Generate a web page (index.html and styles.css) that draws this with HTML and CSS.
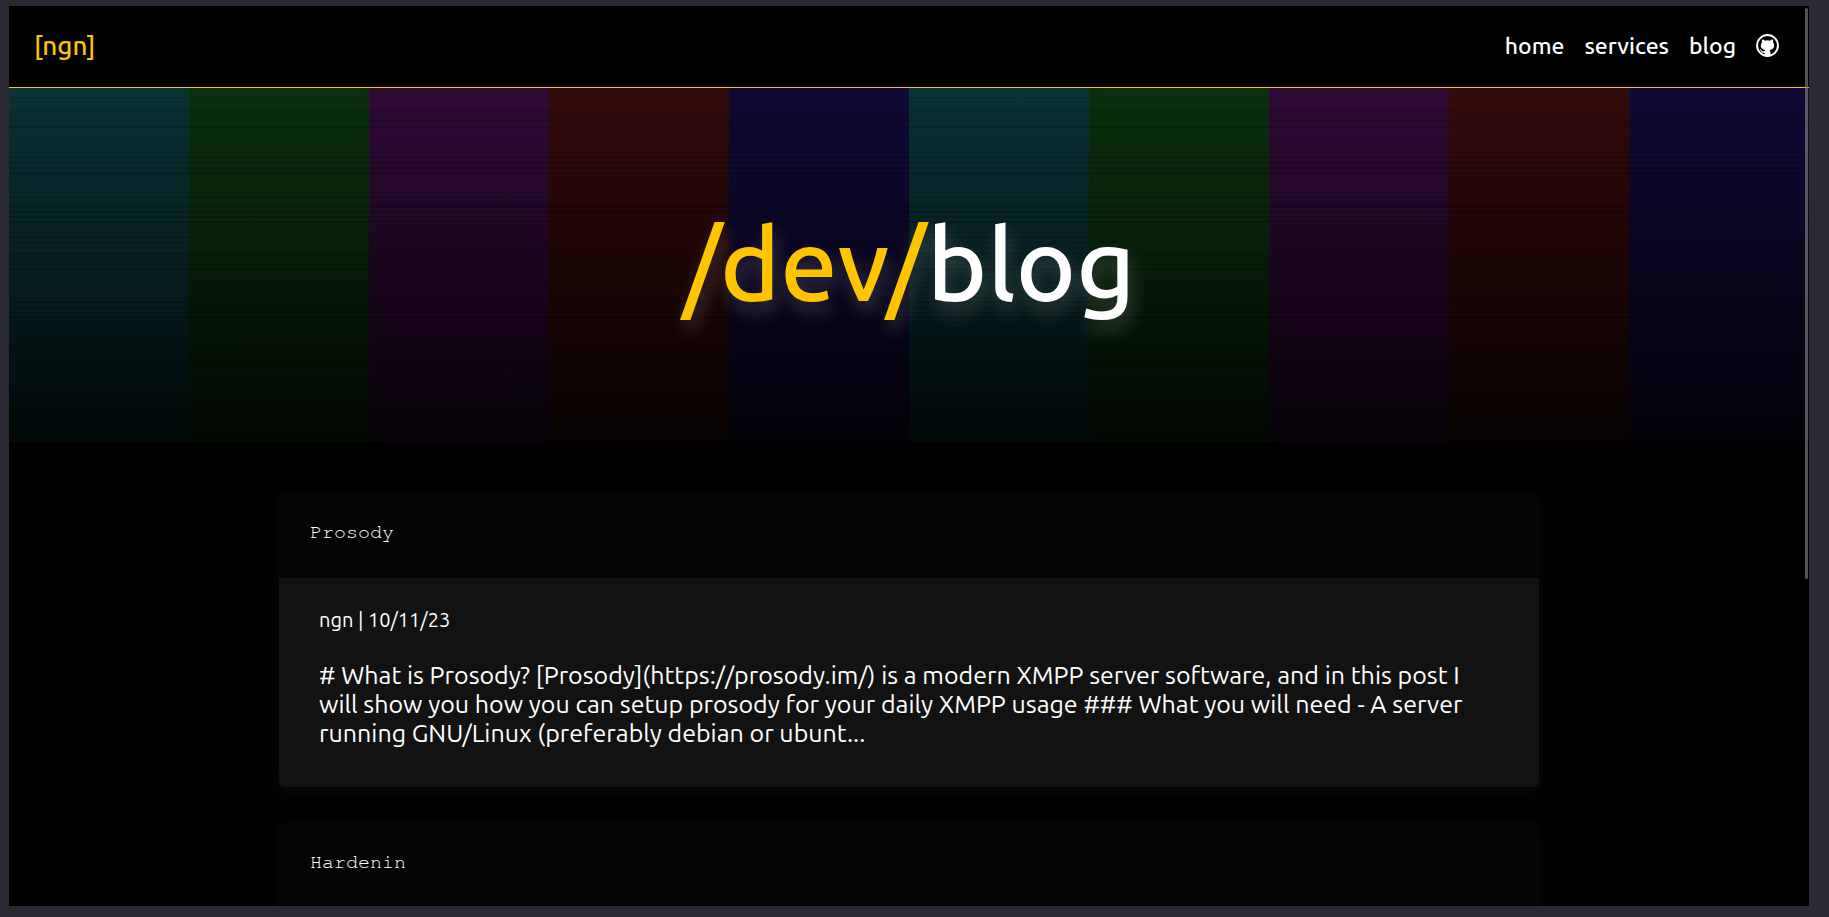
FILE: index.html
```html
<!DOCTYPE html>
<html lang="en">
<head>
<meta charset="utf-8">
<title>[ngn] | blog</title>
<link rel="stylesheet" href="styles.css">
</head>
<body>
<div class="window">
  <header class="navbar">
    <a class="brand" href="#">[ngn]</a>
    <nav class="links">
      <a href="#">home</a>
      <a href="#">services</a>
      <a href="#">blog</a>
      <a class="github" href="#" aria-label="GitHub">
        <svg viewBox="0 0 24 24" width="23" height="23" aria-hidden="true">
          <circle cx="12" cy="12" r="10.900" fill="none" stroke="#fff" stroke-width="2"/>
          <path fill="#fff" d="M9 23v-3.200c-2.600.3-3.500-.9-4.100-2.200-.3-.7-.7-1.100-1.200-1.500.9-.3 1.700.2 2.200 1 .7 1.100 1.400 1.400 3.100 1 .1-.6.4-1.200.8-1.500-3-.4-4.800-1.900-4.800-4.700 0-1.300.4-2.300 1.200-3.100-.3-1-.2-2.100.2-3 1.200 0 2.200.6 3 1.200a10 10 0 0 1 5.200 0c.8-.6 1.800-1.200 3-1.200.4.900.5 2 .2 3 .8.8 1.200 1.800 1.200 3.100 0 2.800-1.800 4.300-4.800 4.700.6.5.9 1.300.9 2.300V23z"/>
        </svg>
      </a>
    </nav>
  </header>
  <main>
    <section class="hero">
      <h1><span class="path">/dev/</span>blog</h1>
    </section>
    <section class="posts">
      <article class="post">
        <h2>Prosody</h2>
        <div class="body">
          <p class="meta">ngn | 10/11/23</p>
          <p class="text"># What is Prosody? [Prosody](https://prosody.im/) is a modern XMPP server software, and in this post I will show you how you can setup prosody for your daily XMPP usage ### What you will need - A server running GNU/Linux (preferably debian or ubunt...</p>
        </div>
      </article>
      <article class="post">
        <h2>Hardenin</h2>
      </article>
    </section>
  </main>
  <div class="scrollbar"></div>
</div>
</body>
</html>
```
FILE: styles.css
```css
* {
  box-sizing: border-box;
  margin: 0;
  padding: 0;
}

body {
  height: 100vh;
  padding: 6px 20px 11px 9px;
  background: #2b2933;
  color: #fff;
  font-family: Ubuntu, "Noto Sans", sans-serif;
  overflow: hidden;
}

.window {
  position: relative;
  height: 100%;
  background: #000;
  overflow: hidden;
}

.navbar {
  display: flex;
  align-items: center;
  justify-content: space-between;
  height: 82px;
  padding: 0 30px 2px 25px;
  border-bottom: 1px solid #ffc400;
  font-size: 23px;
  font-weight: 500;
}

.navbar a {
  color: #fff;
  text-decoration: none;
}

.navbar .brand {
  color: #ffc400;
  font-size: 26px;
}

.links {
  display: flex;
  align-items: center;
  gap: 20px;
}

.github svg {
  display: block;
}

.hero {
  display: flex;
  align-items: center;
  justify-content: center;
  height: 354px;
  padding-bottom: 4px;
  background:
    repeating-linear-gradient(rgba(0, 0, 0, 0) 0 4px, rgba(0, 0, 0, 0.15) 4px 5px),
    repeating-linear-gradient(rgba(0, 0, 0, 0) 0 21px, rgba(0, 0, 0, 0.15) 21px 23px, rgba(0, 0, 0, 0) 23px 27px, rgba(0, 0, 0, 0.25) 27px 28px, rgba(0, 0, 0, 0) 28px 32px, rgba(0, 0, 0, 0.2) 32px 33px, rgba(0, 0, 0, 0) 33px 37px, rgba(0, 0, 0, 0.2) 37px 39px, rgba(0, 0, 0, 0) 39px 48px),
    linear-gradient(rgba(0, 0, 0, 0), rgba(0, 0, 0, 0.85)),
    repeating-linear-gradient(90deg, #0a3437 0 10%, #0a320d 10% 20%, #300a37 20% 30%, #340a0a 30% 40%, #100a37 40% 50%);
}

.hero h1 {
  font-size: 102px;
  font-weight: 500;
  line-height: 116px;
  text-shadow: 3px 10px 18px rgba(255, 255, 255, 0.2);
}

.hero .path {
  color: #ffc400;
}

.posts {
  display: flex;
  flex-direction: column;
  gap: 35px;
  width: 70%;
  margin: 0 auto;
  padding-top: 50px;
}

.post {
  border-radius: 6px;
  background: #050505;
  box-shadow: 0 6px 16px rgba(255, 255, 255, 0.04);
}

.post h2 {
  height: 86px;
  padding: 28px 31px;
  color: #fff;
  font: 400 20px/24px FreeMono, "Courier 10 Pitch", "Liberation Mono", monospace;
}

.post .body {
  padding: 28px 40px 39px;
  border-radius: 0 0 6px 6px;
  background: #121212;
}

.post .meta {
  margin-bottom: 28px;
  font-size: 20px;
  line-height: 27px;
}

.post .text {
  font-size: 25px;
  line-height: 29px;
}

.scrollbar {
  position: absolute;
  top: 2px;
  right: 1px;
  width: 3px;
  height: 571px;
  border-radius: 2px;
  background: rgba(128, 128, 128, 0.65);
}
```
